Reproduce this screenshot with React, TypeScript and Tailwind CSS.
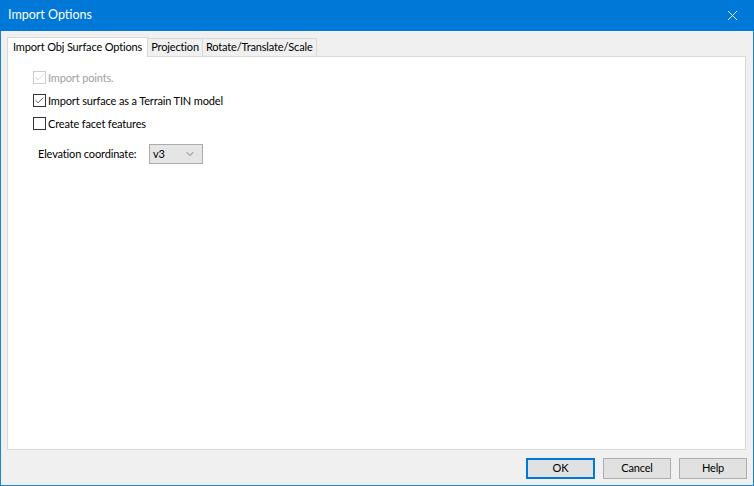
import { X, Check, ChevronDown } from 'lucide-react';

const font = { fontFamily: 'Lato, "Noto Sans", sans-serif' };

function CheckBox({ checked, disabled, label }: { checked: boolean; disabled?: boolean; label: string }) {
  return (
    <div className="flex items-center h-[13px]">
      <span
        className={`w-[13px] h-[13px] border flex items-center justify-center bg-white shrink-0 ${
          disabled ? 'border-[#cccccc]' : 'border-[#333333]'
        }`}
      >
        {checked && (
          <Check size={11} strokeWidth={1.6} className={disabled ? 'text-[#c6c6c6]' : 'text-[#222222]'} />
        )}
      </span>
      <span className={`ml-[2px] leading-none whitespace-nowrap ${disabled ? 'text-[#a0a0a0]' : 'text-black'}`}>
        {label}
      </span>
    </div>
  );
}

export default function App() {
  return (
    <div
      className="w-[754px] h-[486px] flex flex-col bg-[#f0f0f0] border-x border-b border-[#1883d7] text-[11px] tracking-[-0.15px]"
      style={font}
    >
      {/* Title bar */}
      <div className="h-[31px] -mx-px bg-[#0078d7] flex items-center justify-between pl-[8px] pr-[13px] shrink-0">
        <span className="text-white text-[12.5px] tracking-normal">Import Options</span>
        <X size={17} strokeWidth={1.2} className="text-white" />
      </div>

      {/* Tabs */}
      <div className="flex items-end pl-[6px] pt-[5px] h-[25px] shrink-0 whitespace-nowrap">
        <div className="h-[20px] px-[5px] bg-white border border-b-0 border-[#d9d9d9] flex items-center relative z-10 -mb-px">
          Import Obj Surface Options
        </div>
        <div className="h-[18px] px-[3px] bg-[#f0f0f0] border border-l-0 border-b-0 border-[#d9d9d9] flex items-center">
          Projection
        </div>
        <div className="h-[18px] px-[3px] bg-[#f0f0f0] border border-l-0 border-b-0 border-[#d9d9d9] flex items-center">
          Rotate/Translate/Scale
        </div>
      </div>

      {/* Panel */}
      <div className="ml-[6px] mr-[7px] h-[394px] bg-white border border-[#d9d9d9] shrink-0">
        <div className="pl-[25px] pt-[14px] flex flex-col gap-[10px]">
          <CheckBox checked disabled label="Import points." />
          <CheckBox checked label="Import surface as a Terrain TIN model" />
          <CheckBox checked={false} label="Create facet features" />
          <div className="flex items-center mt-[4px]">
            <span className="ml-[5px] w-[111px] whitespace-nowrap">Elevation coordinate:</span>
            <div className="w-[54px] h-[20px] bg-[#e5e5e5] border border-[#acacac] flex items-center justify-between pl-[3px] pr-[6px]">
              <span>v3</span>
              <ChevronDown size={12} strokeWidth={1.3} className="text-[#444]" />
            </div>
          </div>
        </div>
      </div>

      {/* Buttons */}
      <div className="flex justify-end gap-[8px] pr-[6px] pt-[8px]">
        <button className="w-[69px] h-[21px] bg-[#e1e1e1] border-2 border-[#0078d7]">OK</button>
        <button className="w-[68px] h-[21px] bg-[#e1e1e1] border border-[#adadad]">Cancel</button>
        <button className="w-[68px] h-[21px] bg-[#e1e1e1] border border-[#adadad]">Help</button>
      </div>
    </div>
  );
}
